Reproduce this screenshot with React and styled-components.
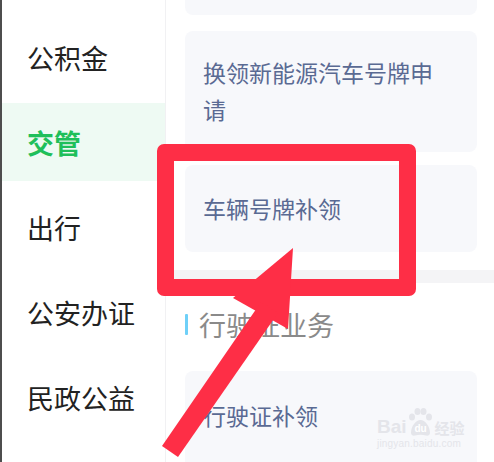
import React from "react";
import styled, { createGlobalStyle } from "styled-components";

const Global = createGlobalStyle`
  html, body { margin: 0; padding: 0; background: #fff; }
  body { width: 494px; height: 462px; overflow: hidden; font-family: "Noto Sans CJK SC", "Noto Sans", sans-serif; }
`;

const Page = styled.div`
  position: relative;
  width: 494px;
  height: 462px;
  display: flex;
  overflow: hidden;
  background: #fff;
`;

const EdgeLine = styled.div`
  width: 2px;
  flex: none;
  background: #4d4d4d;
`;

const Sidebar = styled.nav`
  width: 164px;
  flex: none;
  border-right: 1px solid #f1f1f3;
  display: flex;
  flex-direction: column;
  gap: 7px;
  padding-top: 18px;
  box-sizing: border-box;
`;

const NavItem = styled.div`
  height: 78px;
  display: flex;
  align-items: center;
  padding-left: 25px;
  font-size: 27px;
  color: ${(p) => (p.$active ? "#1fbf5a" : "#222")};
  font-weight: ${(p) => (p.$active ? 700 : 400)};
  background: ${(p) => (p.$active ? "#eefaf3" : "transparent")};
`;

const Content = styled.main`
  flex: 1;
  display: flex;
  flex-direction: column;
`;

const Card = styled.div`
  margin: ${(p) => p.$mt || 0}px 17px 0 19px;
  background: #f7f8fb;
  border-radius: ${(p) => (p.$clip ? "0 0 8px 8px" : "8px")};
  height: ${(p) => p.$h}px;
  box-sizing: border-box;
  padding: ${(p) => p.$pt || 0}px 40px 0 18px;
  font-size: 23px;
  line-height: 37px;
  color: #5a6a93;
  flex: none;
`;

const Separator = styled.div`
  margin-top: 18px;
  height: 13px;
  background: #f4f4f6;
  flex: none;
`;

const SectionTitle = styled.div`
  margin: 26px 0 0 19px;
  display: flex;
  align-items: center;
  gap: 11px;
  height: 30px;
  font-size: 27px;
  color: #8a8a8a;
  flex: none;
`;

const TitleBar = styled.span`
  width: 3px;
  height: 21px;
  background: #6fd0f8;
  border-radius: 1px;
`;

const HighlightBox = styled.div`
  position: absolute;
  left: 157px;
  top: 144px;
  width: 259px;
  height: 152px;
  box-sizing: border-box;
  border: 17px solid #fe2e46;
  border-radius: 7px;
`;

const Overlay = styled.svg`
  position: absolute;
  left: 0;
  top: 0;
  pointer-events: none;
`;

const Watermark = styled.div`
  position: absolute;
  left: 377px;
  top: 407px;
  display: flex;
  flex-direction: column;
  align-items: flex-start;
  color: #e4e5ea;
  pointer-events: none;
`;

const WmRow = styled.div`
  display: flex;
  align-items: flex-end;
  height: 29px;
  font-family: "Liberation Sans", Arial, sans-serif;
  font-weight: 700;
  font-size: 19px;
  line-height: 1;
`;

const WmCjk = styled.span`
  font-family: "Noto Sans CJK SC", sans-serif;
  font-size: 15px;
  font-weight: 700;
  margin-left: 1px;
  padding-bottom: 1px;
`;

const WmUrl = styled.div`
  font-family: "Liberation Sans", Arial, sans-serif;
  font-size: 10px;
  margin-top: 2px;
  letter-spacing: 0.2px;
`;

export default function App() {
  return (
    <Page>
      <Global />
      <EdgeLine />
      <Sidebar>
        <NavItem>公积金</NavItem>
        <NavItem $active>交管</NavItem>
        <NavItem>出行</NavItem>
        <NavItem>公安办证</NavItem>
        <NavItem>民政公益</NavItem>
      </Sidebar>
      <Content>
        <Card $clip $h={15} />
        <Card $mt={16} $h={121} $pt={23}>换领新能源汽车号牌申请</Card>
        <Card $mt={13} $h={87} $pt={25}>车辆号牌补领</Card>
        <Separator />
        <SectionTitle>
          <TitleBar />
          行驶证业务
        </SectionTitle>
        <Card $mt={32} $h={120} $pt={26}>行驶证补领</Card>
      </Content>

      <HighlightBox />

      <Watermark>
        <WmRow>
          Bai
          <svg width="27" height="29" viewBox="0 0 27 29">
            <ellipse cx="5" cy="10" rx="3" ry="3.6" fill="#e4e5ea" />
            <ellipse cx="10.5" cy="4.5" rx="3" ry="3.6" fill="#e4e5ea" />
            <ellipse cx="16.5" cy="4.5" rx="3" ry="3.6" fill="#e4e5ea" />
            <ellipse cx="22" cy="10" rx="3" ry="3.6" fill="#e4e5ea" />
            <path d="M4 26 C4 19 9 13 13.5 13 C18 13 23 19 23 26 C23 28 21 29 19 28.5 C15 27.5 12 27.5 8 28.5 C6 29 4 28 4 26 Z" fill="#e4e5ea" />
            <text x="13.5" y="25" textAnchor="middle" fontSize="10" fontWeight="700" fontFamily="Liberation Sans, Arial, sans-serif" fill="#fff">du</text>
          </svg>
          <WmCjk>经验</WmCjk>
        </WmRow>
        <WmUrl>jingyan.baidu.com</WmUrl>
      </Watermark>

      <Overlay width="494" height="462" viewBox="0 0 494 462">
        <polygon points="293,248 288,329 233,298" fill="#fe2e46" />
        <polygon points="162,446 178,457 278,313 261,302" fill="#fe2e46" />
      </Overlay>
    </Page>
  );
}
